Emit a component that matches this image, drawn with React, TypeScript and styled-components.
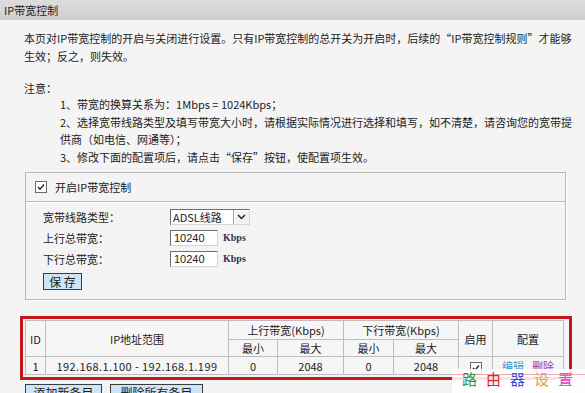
import React from 'react';
import styled, { createGlobalStyle } from 'styled-components';

const GlobalStyle = createGlobalStyle`
  html, body {
    margin: 0;
    padding: 0;
  }
  body {
    background: #f4f4f4;
    font-family: "Noto Sans CJK SC", "Noto Sans", sans-serif;
    font-size: 11px;
    color: #1c1c1c;
  }
`;

const Page = styled.div`
  position: relative;
  width: 585px;
  height: 393px;
  overflow: hidden;
`;

const TitleBar = styled.div`
  height: 20px;
  line-height: 20px;
  padding-left: 4px;
  background: linear-gradient(#dcdcdc, #cfcfcf);
`;

const Content = styled.div`
  padding: 9px 0 0 24px;
`;

const Intro = styled.p`
  margin: 0;
  line-height: 18px;
  white-space: nowrap;
`;

const NoteTitle = styled.div`
  margin-top: 15px;
  line-height: 16px;
`;

const NoteList = styled.div`
  padding-left: 36px;
  line-height: 17.5px;
  white-space: nowrap;
`;

const SettingsBox = styled.div`
  margin: 6px 0 0 1px;
  width: 539px;
  border: 1px solid #b9b9b9;
  box-shadow: 1px 1px 0 #ffffff;
`;

const BoxHeader = styled.div`
  height: 28px;
  display: flex;
  align-items: center;
  gap: 8px;
  padding-left: 9px;
  border-bottom: 1px solid #b9b9b9;
  box-shadow: 0 1px 0 #ffffff;
`;

const BoxBody = styled.div`
  padding: 4px 0 9px 17px;
`;

const FormRow = styled.div`
  height: 21px;
  display: flex;
  align-items: center;
`;

const Label = styled.span`
  width: 127px;
`;

const Checkbox = styled.span`
  width: 10px;
  height: 10px;
  border: 1px solid #6b6b6b;
  background: #ffffff;
  display: inline-flex;
  align-items: center;
  justify-content: center;
  vertical-align: middle;
`;

const SelectBox = styled.div`
  width: 78px;
  height: 14px;
  display: flex;
  border: 1px solid;
  border-color: #6e6e6e #d8d8d8 #d8d8d8 #6e6e6e;
  background: #ffffff;
`;

const SelectText = styled.span`
  flex: 1;
  padding-left: 2px;
  line-height: 14px;
  font-size: 11px;
`;

const SelectArrow = styled.span`
  width: 15px;
  display: flex;
  align-items: center;
  justify-content: center;
  border-left: 1px solid #a0a0a0;
  background: #f2f2f2;
  box-shadow: inset 1px 1px 0 #ffffff;
`;

const TextInput = styled.div`
  width: 43px;
  height: 14px;
  padding-left: 3px;
  line-height: 14px;
  border: 1px solid;
  border-color: #707070 #d4d4d4 #d4d4d4 #707070;
  background: #ffffff;
  font-family: "Liberation Sans", Arial, sans-serif;
  font-size: 11px;
`;

const Unit = styled.span`
  margin-left: 5px;
  font-family: "Liberation Serif", serif;
  font-weight: bold;
  font-size: 10px;
  color: #33334d;
`;

const Button = styled.button<{ $width: number }>`
  width: ${p => p.$width}px;
  height: 17px;
  padding: 0;
  border: 1px solid #3c3c3c;
  background: #cfe4f4;
  font-family: "Noto Sans CJK SC", sans-serif;
  font-size: 12px;
  line-height: 14px;
  color: #1c1c1c;
  cursor: pointer;
`;

const SaveRow = styled.div`
  margin-top: 4px;
  display: flex;
`;

const RuleFrame = styled.div`
  margin: 16px 0 0 -4px;
  width: 542px;
  padding: 1px 2px 2px 2px;
  border: 3px solid #c9161d;
`;

const RuleTable = styled.table`
  width: 538px;
  table-layout: fixed;
  border-collapse: collapse;
  background: #f6f6f6;

  th, td {
    border: 1px solid #bdbdbd;
    padding: 0;
    text-align: center;
    font-weight: normal;
    font-size: 11px;
    white-space: nowrap;
  }
`;

const TableRow = styled.tr<{ $height: number }>`
  height: ${p => p.$height}px;
`;

const IpCell = styled.td`
  letter-spacing: 0.4px;
`;

const Action = styled.a<{ $color: string }>`
  color: ${p => p.$color};
  text-decoration: none;
  margin: 0 4px;
`;

const BottomButtons = styled.div`
  margin: 4px 0 0 1px;
  display: flex;
  gap: 8px;
`;

const Watermark = styled.div`
  position: absolute;
  left: 452px;
  top: 369px;
  width: 133px;
  height: 24px;
  background: rgba(255, 255, 255, 0.88);
`;

const WatermarkLine = styled.div`
  position: absolute;
  left: 0;
  right: 0;
  top: 5px;
  height: 1px;
  background: #f2a6b0;
`;

const WatermarkChars = styled.div`
  position: relative;
  display: flex;
  gap: 9px;
  padding: 1px 0 0 10px;
`;

const WatermarkChar = styled.span<{ $color: string }>`
  width: 15px;
  font-size: 15px;
  line-height: 17px;
  color: ${p => p.$color};
`;

const CheckMark = () => (
  <svg width="8" height="8" viewBox="0 0 8 8">
    <path d="M1 4 L3 6.2 L7 1.5" fill="none" stroke="#222" strokeWidth="1.3" />
  </svg>
);

const Chevron = () => (
  <svg width="9" height="6" viewBox="0 0 9 6">
    <path d="M1 1 L4.5 4.5 L8 1" fill="none" stroke="#222" strokeWidth="1.5" />
  </svg>
);

const watermark = [
  { ch: '路', color: '#2f9a3c' },
  { ch: '由', color: '#e0242c' },
  { ch: '器', color: '#3454d1' },
  { ch: '设', color: '#e3a335' },
  { ch: '置', color: '#df3fc4' },
];

const App: React.FC = () => {
  return (
    <Page>
      <GlobalStyle />
      <TitleBar>IP带宽控制</TitleBar>
      <Content>
        <Intro>
          本页对IP带宽控制的开启与关闭进行设置。只有IP带宽控制的总开关为开启时，后续的“IP带宽控制规则”才能够
          <br />
          生效；反之，则失效。
        </Intro>

        <NoteTitle>注意：</NoteTitle>
        <NoteList>
          <div>1、带宽的换算关系为：1Mbps = 1024Kbps；</div>
          <div>2、选择宽带线路类型及填写带宽大小时，请根据实际情况进行选择和填写，如不清楚，请咨询您的宽带提</div>
          <div>供商（如电信、网通等）；</div>
          <div>3、修改下面的配置项后，请点击“保存”按钮，使配置项生效。</div>
        </NoteList>

        <SettingsBox>
          <BoxHeader>
            <Checkbox><CheckMark /></Checkbox>
            <span>开启IP带宽控制</span>
          </BoxHeader>
          <BoxBody>
            <FormRow>
              <Label>宽带线路类型：</Label>
              <SelectBox>
                <SelectText>ADSL线路</SelectText>
                <SelectArrow><Chevron /></SelectArrow>
              </SelectBox>
            </FormRow>
            <FormRow>
              <Label>上行总带宽：</Label>
              <TextInput>10240</TextInput>
              <Unit>Kbps</Unit>
            </FormRow>
            <FormRow>
              <Label>下行总带宽：</Label>
              <TextInput>10240</TextInput>
              <Unit>Kbps</Unit>
            </FormRow>
            <SaveRow>
              <Button $width={39}>保 存</Button>
            </SaveRow>
          </BoxBody>
        </SettingsBox>

        <RuleFrame>
          <RuleTable>
            <colgroup>
              <col style={{ width: 20 }} />
              <col style={{ width: 183 }} />
              <col style={{ width: 49 }} />
              <col style={{ width: 66 }} />
              <col style={{ width: 50 }} />
              <col style={{ width: 65 }} />
              <col style={{ width: 34 }} />
              <col style={{ width: 71 }} />
            </colgroup>
            <thead>
              <TableRow $height={19}>
                <th rowSpan={2}>ID</th>
                <th rowSpan={2}>IP地址范围</th>
                <th colSpan={2}>上行带宽(Kbps)</th>
                <th colSpan={2}>下行带宽(Kbps)</th>
                <th rowSpan={2}>启用</th>
                <th rowSpan={2}>配置</th>
              </TableRow>
              <TableRow $height={17}>
                <th>最小</th>
                <th>最大</th>
                <th>最小</th>
                <th>最大</th>
              </TableRow>
            </thead>
            <tbody>
              <TableRow $height={18}>
                <td>1</td>
                <IpCell>192.168.1.100 - 192.168.1.199</IpCell>
                <td>0</td>
                <td>2048</td>
                <td>0</td>
                <td>2048</td>
                <td><Checkbox><CheckMark /></Checkbox></td>
                <td>
                  <Action $color="#3a95c9">编辑</Action>
                  <Action $color="#9a3aa8">删除</Action>
                </td>
              </TableRow>
            </tbody>
          </RuleTable>
        </RuleFrame>

        <BottomButtons>
          <Button $width={77}>添加新条目</Button>
          <Button $width={93}>删除所有条目</Button>
        </BottomButtons>
      </Content>

      <Watermark>
        <WatermarkLine />
        <WatermarkChars>
          {watermark.map(w => (
            <WatermarkChar key={w.ch} $color={w.color}>{w.ch}</WatermarkChar>
          ))}
        </WatermarkChars>
      </Watermark>
    </Page>
  );
};

export default App;
